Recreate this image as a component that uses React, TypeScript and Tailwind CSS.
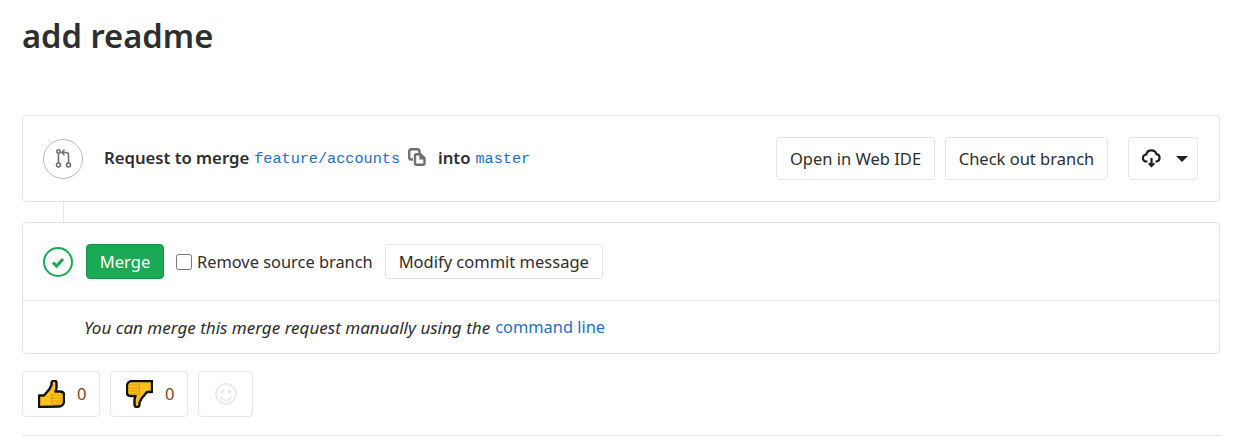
import React from 'react';

const sans = { fontFamily: '"Noto Sans", sans-serif' };
const mono = { fontFamily: '"Liberation Mono", monospace' };

function BranchIcon() {
  return (
    <svg width="17" height="19" viewBox="0 0 17 19" fill="none" stroke="#6f6f6f" strokeWidth="1.6">
      <circle cx="3.500" cy="16" r="2" />
      <circle cx="13.500" cy="16" r="2" />
      <circle cx="3.500" cy="2.500" r="1.700" />
      <path d="M3.500 14V4.200M13.500 14V6a2.500 2.500 0 0 0-2.500-2.500H8" />
      <path d="M9.500 0.800 6.800 3.500l2.700 2.700" />
    </svg>
  );
}

function CopyIcon() {
  return (
    <svg width="18" height="18" viewBox="0 0 18 18" fill="none" stroke="#6f6f6f" strokeWidth="2.400">
      <path d="M5 11.500H3.500a2.300 2.300 0 0 1-2.300-2.300V3.500a2.300 2.300 0 0 1 2.300-2.300h5.700a2.300 2.300 0 0 1 2.300 2.300V5" />
      <path d="M8.500 6.200h4l4 4v5a1.500 1.500 0 0 1-1.500 1.500H8.500A1.500 1.500 0 0 1 7 15.200V7.700a1.500 1.500 0 0 1 1.500-1.500z" fill="#fff" />
      <path d="M12 7v3.800h4" fill="#6f6f6f" strokeWidth="1.400" />
    </svg>
  );
}

function CloudIcon() {
  return (
    <svg width="19" height="19" viewBox="0 0 19 19" fill="none" stroke="#1f1f1f" strokeWidth="2.200">
      <path d="M5.500 12.500H4.500a3.500 3.500 0 0 1-.3-7A5.300 5.300 0 0 1 14.500 5.200a3.700 3.700 0 0 1 0 7.300H13.500" />
      <path d="M9.500 9v8" />
      <path d="M6.800 14.200 9.500 17l2.700-2.800" />
    </svg>
  );
}

function ThumbUp() {
  return (
    <svg width="27" height="28" viewBox="0 0 27 28">
      <path d="M1 27V15.500h5L11.500 9 13.500 5V3a2.500 2.500 0 0 1 5 0v5l-1 3.500h4.500c2.500 0 4 1.500 4 3.500v6c0 3-2 5.500-5 5.500z" fill="#fcc21b" stroke="#111" strokeWidth="2.400" strokeLinejoin="round" />
      <path d="M14 15h11M14 18h11M14 21h11M14 24h9M13.500 14v12" stroke="#e39a10" strokeWidth="1" fill="none" />
    </svg>
  );
}

function ThumbDown() {
  return (
    <svg width="27" height="28" viewBox="0 0 27 28">
      <path d="M26 1H6C3 1 1 3.500 1 6.500v6c0 2 1.500 3.500 4 3.500h4.500l-1 3.500v5a2.500 2.500 0 0 0 5 0v-2l2-4 5.500-6.500h5z" fill="#fcc21b" stroke="#111" strokeWidth="2.400" strokeLinejoin="round" />
      <path d="M2 5h11M2 8h11M2 11h11M4 14h9M13.500 3v12" stroke="#e39a10" strokeWidth="1" fill="none" />
    </svg>
  );
}

function Smile() {
  return (
    <svg width="24" height="24" viewBox="0 0 24 24" fill="none" stroke="#ebebeb" strokeWidth="2">
      <circle cx="12" cy="12" r="10" />
      <circle cx="8.500" cy="9.500" r="1" fill="#ebebeb" />
      <circle cx="15.500" cy="9.500" r="1" fill="#ebebeb" />
      <path d="M6.500 14.500c1.500 3 3.500 4 5.500 4s4-1 5.500-4" />
    </svg>
  );
}

export default function App() {
  return (
    <div className="w-[1233px] h-[444px] overflow-hidden bg-white text-[#2e2e2e] text-[16.5px]" style={sans}>
      <div className="pl-[22px] pr-[13px]">
        <h1 className="h-[115px] pt-[13px] text-[32.7px] leading-[46px] font-semibold">add readme</h1>

        <div className="h-[87px] border border-[#e5e5e5] rounded flex items-center pl-5 pr-[21px]">
          <div className="w-[40px] h-[40px] rounded-full border border-[#bababa] flex items-center justify-center shrink-0 mr-[21px]">
            <BranchIcon />
          </div>
          <span className="font-semibold text-[16.7px] -mt-[2px]">Request to merge</span>
          <span className="ml-[5px] text-[15.2px] text-[#1f6fc4] mt-px" style={mono}>feature/accounts</span>
          <span className="ml-2 mr-3 flex -mt-[3px]"><CopyIcon /></span>
          <span className="font-semibold text-[16.7px] -mt-[2px]">into</span>
          <span className="ml-[5px] text-[15.2px] text-[#1f6fc4] mt-px" style={mono}>master</span>
          <div className="ml-auto flex items-center">
            <button className="h-[43px] w-[159px] pt-px border border-[#e5e5e5] rounded">Open in Web IDE</button>
            <button className="h-[43px] w-[163px] pt-px border border-[#e5e5e5] rounded ml-[10px]">Check out branch</button>
            <button className="h-[43px] w-[70px] pl-[3px] border border-[#e5e5e5] rounded ml-5 flex items-center justify-center gap-[15px]">
              <CloudIcon />
              <span className="w-0 h-0 border-x-[6px] border-x-transparent border-t-[6px] border-t-[#1f1f1f]" />
            </button>
          </div>
        </div>

        <div className="ml-[41px] w-px h-5 bg-[#e5e5e5]" />

        <div className="border border-[#e5e5e5] rounded">
          <div className="h-[78px] flex items-center pl-5 border-b border-[#e5e5e5]">
            <svg width="30" height="30" viewBox="0 0 30 30" fill="none" className="mr-[13px]">
              <circle cx="15" cy="15" r="14" stroke="#1aaa55" strokeWidth="2" />
              <path d="M10 15.500 13.500 19 20 12" stroke="#1aaa55" strokeWidth="3" />
            </svg>
            <button className="h-[35px] w-[78px] pt-px rounded bg-[#1aaa55] border border-[#168f48] text-white">Merge</button>
            <label className="ml-3 pt-px flex items-center text-[16.4px]">
              <input type="checkbox" className="w-[16px] h-[16px] mr-[5px]" />
              Remove source branch
            </label>
            <button className="ml-3 h-[35px] w-[218px] pt-px border border-[#e5e5e5] rounded">Modify commit message</button>
          </div>
          <div className="h-[52px] flex items-center pl-[61px] pt-px italic text-[17.05px]">
            You can merge this merge request manually using the
            <span className="not-italic text-[#1f6fc4] text-[16.4px] ml-[5px]">command line</span>
          </div>
        </div>

        <div className="flex gap-[10px] mt-[17px]">
          <div className="w-[78px] h-[46px] border border-[#e5e5e5] rounded flex items-center pl-[15px]">
            <ThumbUp />
            <span className="ml-3 text-[#6e4a1e]">0</span>
          </div>
          <div className="w-[78px] h-[46px] border border-[#e5e5e5] rounded flex items-center pl-[15px]">
            <ThumbDown />
            <span className="ml-3 text-[#6e4a1e]">0</span>
          </div>
          <div className="w-[55px] h-[46px] border border-[#e5e5e5] rounded flex items-center justify-center">
            <Smile />
          </div>
        </div>
        <div className="mt-[18px] h-px bg-[#e5e5e5]" />
      </div>
    </div>
  );
}
